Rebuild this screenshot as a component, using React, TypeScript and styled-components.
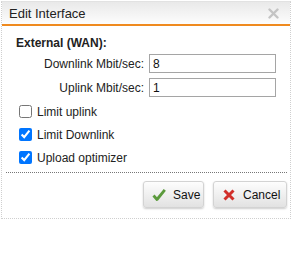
import React from "react";
import styled, { createGlobalStyle } from "styled-components";

const Global = createGlobalStyle`
  html, body { margin: 0; padding: 0; background: #fff; }
  body { font-family: "Liberation Sans", Arial, sans-serif; color: #222; }
`;

const Dialog = styled.div`
  margin: 1px 0 0 1px;
  width: 288px;
  border: 1px dotted #cfcfcf;
  border-top: 1px solid #e2e2e2;
  background: #fff;
`;

const TitleBar = styled.div`
  height: 22px;
  display: flex;
  align-items: center;
  justify-content: space-between;
  padding: 0 11px 0 7px;
  background: linear-gradient(#e9e9e9, #fdfdfd);
  border-bottom: 2px solid #ef8a1f;
  font-size: 13px;
  color: #222;
`;

const Close = styled.svg`
  width: 11px;
  height: 11px;
  display: block;
`;

const Content = styled.div`
  padding: 10px 3px 0 4px;
`;

const Fields = styled.div`
  padding-left: 10px;
  font-size: 12px;
`;

const Heading = styled.div`
  font-weight: bold;
  font-size: 12px;
  line-height: 15px;
  margin-bottom: 3px;
`;

const Grid = styled.div`
  display: grid;
  grid-template-columns: 128px 127px;
  column-gap: 5px;
  row-gap: 5px;
  align-items: center;
`;

const Label = styled.label`
  text-align: right;
  font-size: 12px;
`;

const TextInput = styled.input`
  box-sizing: border-box;
  height: 19px;
  width: 100%;
  margin: 0;
  border: 1px solid #a5a5a5;
  padding: 0 3px;
  font-family: "Liberation Sans", Arial, sans-serif;
  font-size: 12px;
  color: #111;
  outline: none;
`;

const Checks = styled.div`
  margin-top: 3px;
  padding-left: 3px;
  padding-bottom: 3px;
`;

const CheckRow = styled.label`
  display: flex;
  align-items: center;
  height: 23px;
  font-size: 12px;
`;

const Box = styled.input`
  width: 13px;
  height: 13px;
  margin: 0 5px 0 0;
`;

const Separator = styled.div`
  border-top: 1px dotted #777;
`;

const Footer = styled.div`
  display: flex;
  justify-content: flex-end;
  gap: 9px;
  padding: 8px 0 10px;
`;

const Button = styled.button<{ $w: number }>`
  box-sizing: border-box;
  width: ${(p) => p.$w}px;
  height: 27px;
  display: flex;
  align-items: center;
  gap: 7px;
  padding: 0 0 0 8px;
  border: 1px solid #d3d3d3;
  border-radius: 3px;
  background: linear-gradient(#fdfdfd, #e2e2e2);
  box-shadow: 0 1px 2px rgba(0, 0, 0, 0.2);
  font-family: "Liberation Sans", Arial, sans-serif;
  font-size: 12px;
  color: #111;
  cursor: pointer;
`;

const Icon = styled.svg`
  width: 14px;
  height: 14px;
  display: block;
  flex: none;
`;

export default function App() {
  return (
    <>
      <Global />
      <Dialog>
        <TitleBar>
          <span>Edit Interface</span>
          <Close viewBox="0 0 11 11">
            <path d="M1.5 1.5 L9.5 9.5 M9.5 1.5 L1.5 9.5" stroke="#c4c4c4" strokeWidth="2.4" strokeLinecap="round" />
          </Close>
        </TitleBar>
        <Content>
          <Fields>
            <Heading>External (WAN):</Heading>
            <Grid>
              <Label>Downlink Mbit/sec:</Label>
              <TextInput defaultValue="8" />
              <Label>Uplink Mbit/sec:</Label>
              <TextInput defaultValue="1" />
            </Grid>
            <Checks>
              <CheckRow>
                <Box type="checkbox" />
                Limit uplink
              </CheckRow>
              <CheckRow>
                <Box type="checkbox" defaultChecked />
                Limit Downlink
              </CheckRow>
              <CheckRow>
                <Box type="checkbox" defaultChecked />
                Upload optimizer
              </CheckRow>
            </Checks>
          </Fields>
          <Separator />
          <Footer>
            <Button $w={61}>
              <Icon viewBox="0 0 14 14">
                <path d="M1.5 7.5 L5 11.5 L12.8 1.8" fill="none" stroke="#5b9a3c" strokeWidth="2.8" strokeLinejoin="round" />
              </Icon>
              Save
            </Button>
            <Button $w={74}>
              <Icon viewBox="0 0 14 14">
                <path d="M2.5 2.5 L11.5 11.5 M11.5 2.5 L2.5 11.5" stroke="#d12f2a" strokeWidth="3" />
              </Icon>
              Cancel
            </Button>
          </Footer>
        </Content>
      </Dialog>
    </>
  );
}
